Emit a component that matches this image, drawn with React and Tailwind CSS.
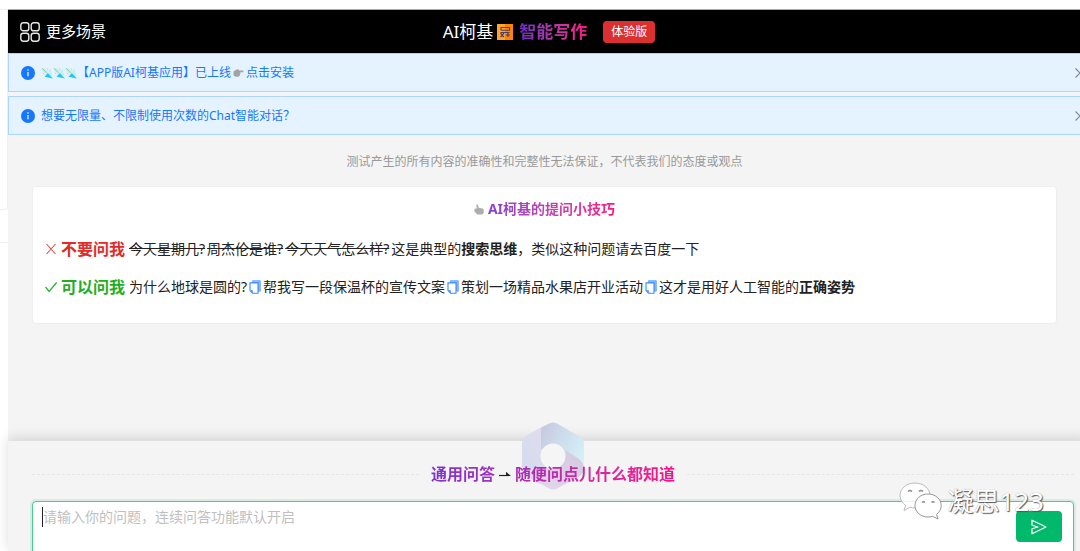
import React from 'react';
import clsx from 'clsx';

const notices = [
    { id: 'app', kites: 3, text: '【APP版AI柯基应用】已上线', action: '点击安装' },
    { id: 'chat', kites: 0, text: '想要无限量、不限制使用次数的Chat智能对话？' }
];

const badQuestions = ['今天星期几?', '周杰伦是谁?', '今天天气怎么样?'];

const goodQuestions = [
    '为什么地球是圆的?',
    '帮我写一段保温杯的宣传文案',
    '策划一场精品水果店开业活动'
];

const gradientText = 'bg-linear-to-r bg-clip-text text-transparent';

const GridIcon = () => (
    <svg viewBox="0 0 20 20" className="size-5" fill="none" stroke="#e8e8e8" strokeWidth="1.4">
        <rect x="0.8" y="0.8" width="8" height="8" rx="2.4" />
        <rect x="11.2" y="0.8" width="8" height="8" rx="2.4" />
        <rect x="0.8" y="11.2" width="8" height="8" rx="2.4" />
        <rect x="11.2" y="11.2" width="8" height="8" rx="2.4" />
    </svg>
);

const CalcIcon = () => (
    <svg viewBox="0 0 16 16" className="size-4" fill="none">
        <rect width="8" height="16" fill="#ffa52a" />
        <rect x="8" width="8" height="16" fill="#ff8400" />
        <path d="M4 6.300h8.500V3.500H4v2.800M3.500 8.500h9" stroke="#5a3a5c" strokeWidth="1.1" />
        <path d="M3.500 9.200l3.400 3.800M6.900 9.200l-3.400 3.800M8.800 11h4.200M10.900 9v4" stroke="#4b3a78" strokeWidth="1.2" />
    </svg>
);

const InfoIcon = () => (
    <svg viewBox="0 0 14 14" className="size-3.5 shrink-0">
        <circle cx="7" cy="7" r="7" fill="#1677ff" />
        <path d="M7 6v4.2" stroke="#fff" strokeWidth="1.2" />
        <circle cx="7" cy="4" r="0.8" fill="#fff" />
    </svg>
);

const KiteIcon = () => (
    <svg viewBox="0 0 12 12" className="size-3">
        <path d="M0.500 0.800L5 1.500 8.500 5 5 7.500 1.500 4z" fill="#dcebe0" />
        <path d="M1 1.200l4.500 4.600" stroke="#5fd0bd" strokeWidth="0.9" />
        <path d="M9.500 1L11.800 11.500 7 6.500z" fill="#c2effa" />
        <path d="M6.800 6L11.800 11.500 3.500 9.800z" fill="#22c9ec" />
        <path d="M1.500 6l2 1.200M6 1.500l1.300 1.200" stroke="#f2bda6" strokeWidth="0.9" />
    </svg>
);

const PointRightIcon = () => (
    <svg viewBox="0 0 11 10" className="h-2.5 w-[11px]" fill="#a3a3a3">
        <path d="M0.5 3.5L3.5 1.5h2.3l0.4 1h4.2v1.7H7.2l0.3 1.2-0.5 1.2-0.4 1.2-1.2 1H2.8L0.5 7.5z" />
    </svg>
);

const PointUpIcon = () => (
    <svg viewBox="0 0 10 11" className="h-[11px] w-2.5" fill="#adadad">
        <path d="M2.4 0.8c0.8-0.6 1.6 0 1.8 0.9l0.5 2.1 3.9 0.7c0.9 0.3 1.1 0.9 1.1 1.6v2.6L8.3 10.5H3.2L0.4 7.3V4.8l2.3-0.4z" />
    </svg>
);

const CloseIcon = () => (
    <svg viewBox="0 0 10 10" className="size-2.5" fill="none" stroke="#7b8794" strokeWidth="1.1">
        <path d="M0.5 0.5l9 9M9.5 0.5l-9 9" />
    </svg>
);

const CrossIcon = () => (
    <svg viewBox="0 0 12 12" className="size-3 shrink-0" fill="none" stroke="#e54848" strokeWidth="1.1">
        <path d="M1.5 1l9 10M10.5 1l-9 10" />
    </svg>
);

const CheckIcon = () => (
    <svg viewBox="0 0 12 12" className="size-3 shrink-0" fill="none" stroke="#2bb52b" strokeWidth="1.3">
        <path d="M0.5 6l3.6 4.5L11.7 1.5" />
    </svg>
);

const CopyIcon = () => (
    <svg viewBox="0 0 12 14" className="h-3.5 w-3" fill="none">
        <path d="M3.5 0.7h7.8v10.5H9.5V2.5h-6z" fill="#8fbcff" stroke="#5c9dff" strokeWidth="0.8" />
        <path d="M1 2.9h8v10.4H3.6L1 10.6z" fill="#fff" stroke="#3d8bff" strokeWidth="1.1" />
        <path d="M1 10.3h2.8v3z" fill="#3d8bff" />
    </svg>
);

const ArrowIcon = () => (
    <svg viewBox="0 0 12 8" className="h-2 w-3" fill="none" stroke="#222" strokeWidth="1.2">
        <path d="M0 5.500h11" />
        <path d="M7 1.800L12 6H7z" fill="#222" stroke="none" />
    </svg>
);

const SendIcon = () => (
    <svg viewBox="0 0 16 16" className="size-4" fill="none" stroke="#fff" strokeWidth="1.2" strokeLinejoin="round">
        <path d="M1 1.200L15 8 1 14.800V9.800L7 8 1 6.200z" />
    </svg>
);

const HexLogo = ({ className }) => (
    <svg viewBox="0 0 64 70" className={className}>
        <defs>
            <linearGradient id="hexLeft" x1="1" y1="0" x2="0" y2="1">
                <stop offset="0" stopColor="#e6dcec" />
                <stop offset="1" stopColor="#cfdcf0" />
            </linearGradient>
            <linearGradient id="hexTop" x1="0" y1="0.2" x2="1" y2="0.8">
                <stop offset="0" stopColor="#c6cbdf" />
                <stop offset="0.4" stopColor="#cddcec" />
                <stop offset="1" stopColor="#d5f3f7" />
            </linearGradient>
            <linearGradient id="hexBottom" x1="1" y1="0" x2="0" y2="1">
                <stop offset="0" stopColor="#d3cadf" />
                <stop offset="0.5" stopColor="#dccfe6" />
                <stop offset="1" stopColor="#e3dbf0" />
            </linearGradient>
        </defs>
        <path d="M24 4L5 15q-4 2.500-4 7v26q0 4 4 7l14 8 13-14q-12-3-12-14z" fill="url(#hexLeft)" />
        <path d="M20 28V7l7-4q5-3 10 0l22 13q4 2.500 4 7v25q0 3-1 4L44 35z" fill="url(#hexTop)" />
        <path d="M44 29l14 9q5 4 5 10-1 5-4 7L37 67q-5 3-10 0L5 54l27-7q12-1 12-12z" fill="url(#hexBottom)" />
        <circle cx="32" cy="35" r="12.500" fill="#f5f5f5" />
    </svg>
);

const WechatIcon = () => (
    <svg viewBox="0 0 44 40" className="h-10 w-11" fill="#fff" stroke="#8b8b8b" strokeWidth="0.9">
        <path d="M16 2C7.500 2 1 7.500 1 14.500c0 4 2.200 7.500 5.600 9.800L5 29.500l6-3.300c1.600 0.500 3.300 0.700 5 0.700 8.500 0 15-5.500 15-12.400S24.500 2 16 2z" fillOpacity="0.85" stroke="#b5b5b5" />
        <path d="M29 13c-7.200 0-13 5-13 11.500S21.800 36 29 36c1.500 0 3-0.200 4.300-0.700L39 38l-1.500-4.600c2.900-2.100 4.700-5.300 4.700-8.900C42.200 18 36.200 13 29 13z" />
        <path d="M9 10.500q2-2 4 0M20 10.500q2-2 4 0M23 21.500q1.500-1.500 3 0M32.500 21.500q1.500-1.500 3 0" fill="none" strokeWidth="1.4" />
    </svg>
);

const Notice = ({ notice }) => (
    <div className="flex h-[39px] items-center gap-1.5 border border-[#a9d5ff] bg-[#e4f3ff] pl-3 pr-1 text-xs text-[#1677ff]">
        <InfoIcon />
        <p className="flex flex-1 items-center">
            {notice.kites > 0 && (
                <span className="flex">
                    {Array.from({ length: notice.kites }, (_, i) => <KiteIcon key={i} />)}
                </span>
            )}
            <span>{notice.text}</span>
            {notice.action && (
                <a href="#install" className="ml-0.5 flex items-center gap-0.5">
                    <PointRightIcon />
                    {notice.action}
                </a>
            )}
        </p>
        <button type="button" aria-label="关闭">
            <CloseIcon />
        </button>
    </div>
);

const Tips = () => (
    <section className="ml-6 mr-[33px] mt-4 rounded border border-[#eeeeee] bg-white px-3 pb-[26px] pt-3 text-sm text-[#222]">
        <h2 className="flex items-center justify-center gap-1 leading-5">
            <PointUpIcon />
            <span className={clsx(gradientText, 'from-[#8a3fd1] to-[#ff0a86] font-bold')}>AI柯基的提问小技巧</span>
        </h2>
        <div className="mt-5 flex h-5 items-center gap-1 whitespace-nowrap">
            <CrossIcon />
            <strong className="text-base text-[#e02b2b]">不要问我</strong>
            <div className="flex items-center gap-0.5">
                {badQuestions.map((q) => (
                    <s key={q}>{q}</s>
                ))}
                <span>这是典型的<b>搜索思维</b>，类似这种问题请去百度一下</span>
            </div>
        </div>
        <div className="mt-[18px] flex h-5 items-center gap-1 whitespace-nowrap">
            <CheckIcon />
            <strong className="text-base text-[#1fae1f]">可以问我</strong>
            <div className="flex items-center gap-0.5">
                {goodQuestions.map((q) => (
                    <React.Fragment key={q}>
                        <span>{q}</span>
                        <button type="button" aria-label={`复制 ${q}`}>
                            <CopyIcon />
                        </button>
                    </React.Fragment>
                ))}
                <span>这才是用好人工智能的<b>正确姿势</b></span>
            </div>
        </div>
    </section>
);

const Composer = () => (
    <footer className="relative bg-[#f4f4f4] pl-6 pr-4 pt-[21px] shadow-[0_-3px_12px_rgba(0,0,0,0.14)]">
        <HexLogo className="absolute -top-5 left-1/2 h-[70px] w-16 -translate-x-7" />
        <div className="relative flex items-center gap-3">
            <span className="flex-1 border-t border-dashed border-[#e6e6e6]" />
            <h2 className="flex items-center gap-1 text-base font-bold">
                <span className={clsx(gradientText, 'from-[#7b34cc] to-[#a02fc4]')}>通用问答</span>
                <ArrowIcon />
                <span className={clsx(gradientText, 'from-[#a829b4] to-[#ff0a86]')}>随便问点儿什么都知道</span>
            </h2>
            <span className="flex-1 border-t border-dashed border-[#e6e6e6]" />
        </div>
        <form className="relative -mb-5 mt-[15px]">
            <textarea
                aria-label="问题"
                placeholder="请输入你的问题，连续问答功能默认开启"
                className="block h-[70px] w-full resize-none rounded border border-[#45cf8c] bg-white px-2.5 py-[3px] text-sm leading-6 shadow-[0_0_0_2px_rgba(5,190,110,0.12)] outline-none placeholder:text-[#bfbfbf]"
            />
            {/* Caret */}
            <span className="pointer-events-none absolute left-2.5 top-1.5 h-5 w-px bg-[#222]" />
            <button
                type="button"
                aria-label="发送"
                className="absolute right-3 top-2.5 flex h-[31px] w-[46px] items-center justify-center rounded bg-[#00b96b]"
            >
                <SendIcon />
            </button>
            <div className="pointer-events-none absolute -top-5 right-[30px] flex items-center gap-1">
                <WechatIcon />
                <span className="text-[26px] leading-10 text-white [text-shadow:1px_1px_1px_#555,0_0_1px_#999]">凝思123</span>
            </div>
        </form>
    </footer>
);

export default function App() {
    return (
        <div className="flex h-screen overflow-hidden bg-white pt-[9px] font-['Noto_Sans','Noto_Sans_CJK_SC',sans-serif]">
            {/* Edge of the side panel */}
            <div className="flex w-2 shrink-0 flex-col gap-8 border-t border-[#eeeeee]">
                <div className="h-[200px] rounded-br border-b border-r border-[#eeeeee]" />
                <div className="flex-1 border-t border-[#eeeeee]" />
            </div>

            <main className="-mr-2.5 flex min-w-0 flex-1 flex-col bg-[#f4f4f4]">
                <header className="grid h-11 grid-cols-[1fr_auto_1fr] items-center border-t border-[#aaaaaa] bg-black px-3 text-white">
                    <button type="button" className="flex items-center gap-1.5 text-[15px]">
                        <GridIcon />
                        更多场景
                    </button>
                    <h1 className="flex items-center gap-1 text-[17px]">
                        AI柯基
                        <CalcIcon />
                        <span className={clsx(gradientText, 'ml-0.5 from-[#7028c8] to-[#ff0a86] font-bold')}>智能写作</span>
                        <span className="ml-3 rounded bg-[#dc2f2f] px-2 text-xs leading-[22px]">体验版</span>
                    </h1>
                </header>
                <div className="flex flex-col gap-1">
                    {notices.map((notice) => (
                        <Notice key={notice.id} notice={notice} />
                    ))}
                </div>
                <div className="flex-1 overflow-hidden">
                    <p className="ml-6 mr-[33px] mt-[19px] text-center text-xs text-[#999]">
                        测试产生的所有内容的准确性和完整性无法保证，不代表我们的态度或观点
                    </p>
                    <Tips />
                </div>
                <Composer />
            </main>
        </div>
    );
}
